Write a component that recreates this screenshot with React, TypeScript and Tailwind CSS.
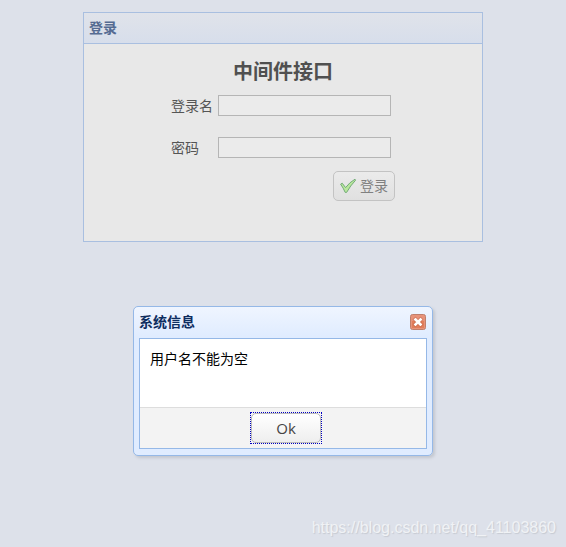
import { useState } from 'react'

const FONT = "font-['Open_Sans','Noto_Sans_CJK_SC',sans-serif]"

const FIELDS = [
  { id: 'username', label: '登录名', type: 'text' },
  { id: 'password', label: '密码', type: 'password' },
]

function CheckIcon() {
  return (
    <svg width="16" height="16" viewBox="0 0 16 16" aria-hidden="true">
      <path
        d="M0.6 6.2 L2.2 5.2 L5.6 9.6 Q9.6 4.2 15 1.2 L15.6 2.2 Q10.4 7.6 6.6 14.4 L5.2 14.4 Q3.4 10 0.6 6.2 Z"
        fill="#b9e79c"
        stroke="#73ab78"
        strokeLinejoin="round"
      />
    </svg>
  )
}

function CloseIcon() {
  return (
    <svg width="16" height="16" viewBox="0 0 16 16" aria-hidden="true">
      <rect x="0.5" y="0.5" width="15" height="15" rx="2" fill="#e8937a" stroke="#bf7f6c" />
      <rect x="2" y="7" width="12" height="7" fill="#dc7048" fillOpacity="0.6" />
      <path d="M5.5 5.5 L10.5 10.5 M10.5 5.5 L5.5 10.5" stroke="#b85b43" strokeWidth="4.4" strokeLinecap="square" opacity="0.4" />
      <path d="M5.5 5.5 L10.5 10.5 M10.5 5.5 L5.5 10.5" stroke="#ffffff" strokeWidth="2.6" strokeLinecap="square" />
    </svg>
  )
}

function MessageDialog({ title, message, onClose }: { title: string; message: string; onClose: () => void }) {
  return (
    <div className="absolute inset-0 flex items-start justify-center pt-[306px]">
      <div
        role="dialog"
        aria-labelledby="dialog-title"
        className="w-[300px] rounded-[5px] border border-[#95b8e7] bg-linear-to-b from-[#eff5ff] to-[#e0ecff] to-20% p-[5px] pb-[6px] shadow-[2px_2px_3px_#c3c7cf]"
      >
        <div className="flex h-[26px] items-center justify-between pb-[6px]">
          <h2 id="dialog-title" className="text-[14px] leading-[20px] font-bold text-[#0e2d5f]">{title}</h2>
          <button type="button" aria-label="关闭" onClick={onClose} className="mr-px">
            <CloseIcon />
          </button>
        </div>
        <div className="border border-[#95b8e7] bg-white">
          <p className="h-[68px] p-[10px] text-[14px] leading-[20px] text-black">{message}</p>
          <div className="flex justify-center border-t border-[#dddddd] bg-[#f3f3f3] py-[4px] pl-[6px]">
            <button
              type="button"
              onClick={onClose}
              className="h-[32px] w-[72px] border border-dotted border-[#0000c0] text-[15px] text-[#444444] outline-none"
            >
              <span className="flex h-full items-center justify-center rounded-[5px] border border-[#bbbbbb] bg-linear-to-b from-white to-[#eeeeee]">
                Ok
              </span>
            </button>
          </div>
        </div>
      </div>
    </div>
  )
}

export default function App() {
  const [open, setOpen] = useState(true)

  return (
    <div className={`relative flex min-h-screen flex-col items-center bg-[#dde1ea] pt-[12px] ${FONT}`}>
      <section className="w-[400px] border border-[#a9bfe0] bg-[#e8e8e8]">
        <header className="border-b border-[#a9bfe0] bg-linear-to-b from-[#e0e3ea] to-[#d7deeb] px-[5px] py-[5px] text-[14px] leading-[20px] font-bold text-[#556b92]">
          登录
        </header>
        <form
          className="mx-auto w-[224px] pt-[14px] pb-[40px] text-[14px] text-[#555555]"
          onSubmit={(e) => {
            e.preventDefault()
            setOpen(true)
          }}
        >
          <h1 className="mb-[9px] text-center text-[20px] leading-[28px] font-bold text-[#505050]">中间件接口</h1>
          <div className="flex flex-col gap-[21px]">
            {FIELDS.map((f) => (
              <div key={f.id} className="flex items-center">
                <label htmlFor={f.id} className="w-[47px] leading-[20px]">{f.label}</label>
                <input
                  id={f.id}
                  type={f.type}
                  className="h-[21px] w-[173px] border border-[#b5b5b5] bg-[#ebebeb] px-[2px] outline-none"
                />
              </div>
            ))}
          </div>
          <div className="mt-[13px] flex justify-end">
            <button
              type="submit"
              className="flex h-[30px] w-[62px] items-center justify-center gap-[4px] rounded-[5px] border border-[#c3c3c3] bg-linear-to-b from-[#ebebeb] to-[#e0e0e0] leading-[20px] text-[#808080]"
            >
              <CheckIcon />
              登录
            </button>
          </div>
        </form>
      </section>

      {open && <MessageDialog title="系统信息" message="用户名不能为空" onClose={() => setOpen(false)} />}

      <footer className="mt-auto self-end pr-[10px] pb-[9px] font-['Liberation_Sans',sans-serif] text-[16px] leading-[20px] text-[#f0f2f5] text-shadow-[1px_1px_1px_#c6cad2]">
        https://blog.csdn.net/qq_41103860
      </footer>
    </div>
  )
}
